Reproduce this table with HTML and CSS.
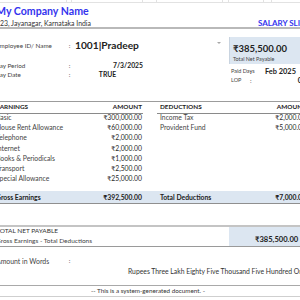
FILE: index.html
```html
<!DOCTYPE html>
<html lang="en">
<head>
<meta charset="utf-8">
<title>Salary Slip</title>
<link rel="stylesheet" href="styles.css">
</head>
<body>
<div class="sheet">
  <div class="gridstrip">
    <span></span><span></span><span></span><span></span><span></span><span></span><span></span><span></span><span></span>
  </div>

  <header class="head">
    <div class="company">My Company Name</div>
    <div class="subhead">
      <span class="addr">123, Jayanagar, Karnataka India</span>
      <span class="title">SALARY SLIP</span>
    </div>
  </header>
  <div class="rule-thick"></div>

  <section class="info">
    <div class="info-left">
      <div class="emp-row">
        <span class="lbl">Employee ID/ Name</span>
        <span class="colon">:</span>
        <span class="emp-val">1001|Pradeep</span>
        <span class="caret"></span>
      </div>
      <div class="kv-row first">
        <span class="lbl">Pay Period</span>
        <span class="colon">:</span>
        <span class="val right">7/3/2025</span>
      </div>
      <div class="kv-row">
        <span class="lbl">Pay Date</span>
        <span class="colon">:</span>
        <span class="val center">TRUE</span>
      </div>
    </div>
    <div class="info-right">
      <div class="net-box">
        <div class="net-val">₹385,500.00</div>
        <div class="net-lbl">Total Net Payable</div>
      </div>
      <div class="days-row first">
        <span class="dlbl">Paid Days</span>
        <span class="dcolon">:</span>
        <span class="dval">Feb 2025</span>
      </div>
      <div class="days-row">
        <span class="dlbl">LOP</span>
        <span class="dcolon">:</span>
        <span class="dval right">0</span>
      </div>
    </div>
  </section>

  <section class="table">
    <div class="trow thead">
      <span class="c-elbl">EARNINGS</span>
      <span class="c-eamt">AMOUNT</span>
      <span class="c-gap"></span>
      <span class="c-dlbl">DEDUCTIONS</span>
      <span class="c-damt">AMOUNT</span>
    </div>
    <div class="trow"><span class="c-elbl">Basic</span><span class="c-eamt">₹300,000.00</span><span class="c-gap"></span><span class="c-dlbl">Income Tax</span><span class="c-damt">₹2,000.00</span></div>
    <div class="trow"><span class="c-elbl">House Rent Allowance</span><span class="c-eamt">₹60,000.00</span><span class="c-gap"></span><span class="c-dlbl">Provident Fund</span><span class="c-damt">₹5,000.00</span></div>
    <div class="trow"><span class="c-elbl">Telephone</span><span class="c-eamt">₹2,000.00</span><span class="c-gap"></span><span class="c-dlbl"></span><span class="c-damt"></span></div>
    <div class="trow"><span class="c-elbl">Internet</span><span class="c-eamt">₹2,000.00</span><span class="c-gap"></span><span class="c-dlbl"></span><span class="c-damt"></span></div>
    <div class="trow"><span class="c-elbl">Books &amp; Periodicals</span><span class="c-eamt">₹1,000.00</span><span class="c-gap"></span><span class="c-dlbl"></span><span class="c-damt"></span></div>
    <div class="trow"><span class="c-elbl">Transport</span><span class="c-eamt">₹2,500.00</span><span class="c-gap"></span><span class="c-dlbl"></span><span class="c-damt"></span></div>
    <div class="trow"><span class="c-elbl">Special Allowance</span><span class="c-eamt">₹25,000.00</span><span class="c-gap"></span><span class="c-dlbl"></span><span class="c-damt"></span></div>
    <div class="trow total">
      <span class="c-elbl">Gross Earnings</span>
      <span class="c-eamt">₹392,500.00</span>
      <span class="c-gap"></span>
      <span class="c-dlbl">Total Deductions</span>
      <span class="c-damt">₹7,000.00</span>
    </div>
  </section>

  <section class="net">
    <div class="net-left">
      <div class="net-title">TOTAL NET PAYABLE</div>
      <div class="net-sub">Gross Earnings - Total Deductions</div>
    </div>
    <div class="net-right">₹385,500.00</div>
  </section>

  <section class="words">
    <div class="words-row">
      <span class="lbl wide">Amount in Words</span>
      <span class="colon">:</span>
    </div>
    <div class="words-text">Rupees Three Lakh Eighty Five Thousand Five Hundred Only</div>
  </section>

  <footer class="foot">-- This is a system-generated document. -</footer>
</div>
</body>
</html>
```

FILE: styles.css
```css
html, body {
  margin: 0;
  padding: 0;
  background: #ffffff;
}
body {
  width: 300px;
  height: 300px;
  overflow: hidden;
  font-family: Lato, "DejaVu Sans", sans-serif;
  color: #3a3a3a;
  font-size: 6.8px;
}
.sheet {
  margin-left: -4px;
  width: 320px;
}

/* excel gridline strip on top */
.gridstrip {
  display: grid;
  grid-template-columns: 71px 5px 71px 14px 66px 6px 35px 8px 44px;
  height: 2px;
  border-bottom: 1px solid #e2e2e2;
}
.gridstrip span {
  border-right: 1px solid #e2e2e2;
}

.company {
  height: 16px;
  line-height: 16px;
  font-size: 10.6px;
  font-weight: 700;
  color: #3434ee;
}
.subhead {
  display: flex;
  height: 8px;
  line-height: 8px;
}
.addr {
  width: 262px;
  flex-shrink: 0;
  font-size: 6.9px;
  color: #333;
}
.title {
  font-size: 8px;
  font-weight: 700;
  color: #3434ee;
  white-space: nowrap;
}
.rule-thick {
  height: 2px;
  background: #b9b9b9;
}

/* info section */
.info {
  display: grid;
  grid-template-columns: 233px 87px;
}
.emp-row {
  display: flex;
  align-items: center;
  margin-top: 10px;
  height: 12px;
}
.lbl {
  width: 71px;
  flex-shrink: 0;
  font-size: 6.3px;
  color: #444;
  white-space: nowrap;
}
.lbl.wide {
  font-size: 6.9px;
}
.colon {
  width: 5px;
  flex-shrink: 0;
  text-align: center;
  font-size: 6.5px;
}
.emp-val {
  margin-left: 3px;
  font-size: 10.2px;
  font-weight: 700;
  color: #222;
}
.caret {
  margin-left: auto;
  margin-right: 8px;
  margin-top: -4px;
  width: 0;
  height: 0;
  border-left: 2px solid transparent;
  border-right: 2px solid transparent;
  border-top: 2px solid #a8a8a8;
}
.kv-row {
  display: flex;
  align-items: center;
  height: 9px;
}
.kv-row.first {
  margin-top: 9.5px;
}
.val {
  width: 71px;
  font-size: 6.8px;
  font-weight: 700;
  color: #222;
}
.val.right { text-align: right; }
.val.center { text-align: center; }

.net-box {
  margin-top: 8px;
  height: 27px;
  background: #dce6f1;
  border-left: 1px solid #c9d4e0;
  padding-left: 3px;
  box-sizing: border-box;
}
.net-val {
  padding-top: 5px;
  height: 13px;
  line-height: 13px;
  font-size: 9.5px;
  font-weight: 700;
  color: #222;
}
.net-lbl {
  margin-top: 1px;
  font-size: 5.4px;
  color: #444;
}
.days-row {
  display: flex;
  align-items: center;
  height: 9px;
  padding-left: 2px;
  font-size: 6.2px;
}
.days-row.first { margin-top: 2.5px; }
.dlbl {
  width: 18px;
  flex-shrink: 0;
  color: #444;
  white-space: nowrap;
  font-size: 5.5px;
}
.dcolon {
  width: 16px;
  flex-shrink: 0;
  padding-left: 1px;
  box-sizing: border-box;
}
.dval {
  width: 37px;
  flex-shrink: 0;
  font-size: 7.4px;
  font-weight: 700;
  color: #222;
  white-space: nowrap;
}
.dval.right { text-align: right; }

/* earnings/deductions table */
.table {
  margin-top: 16.5px;
  border-top: 1px solid #9c9c9c;
}
.trow {
  display: grid;
  grid-template-columns: 76px 71px 14px 115px 44px;
  align-items: center;
  height: 10.2px;
}
.trow > span {
  white-space: nowrap;
  height: 100%;
  line-height: 10.2px;
}
.thead {
  height: 10px;
}
.thead > span {
  font-weight: 700;
  font-size: 6.4px;
  color: #222;
  border-bottom: 1px solid #8a8a8a;
  line-height: 10px;
}
.thead > .c-gap { border-bottom: none; }
.c-elbl { color: #444; }
.c-eamt { text-align: right; padding-right: 1px; color: #2a2a2a; }
.c-dlbl { padding-left: 3px; color: #444; }
.c-damt { text-align: right; padding-right: 10px; color: #2a2a2a; }

.trow.total {
  margin-top: 7.6px;
  height: 12px;
  background: #dce6f1;
  border-bottom: 1px solid #8f8f8f;
}
.trow.total > span {
  line-height: 12px;
  font-weight: 700;
  color: #222;
}

/* net payable */
.net {
  margin-top: 21px;
  display: grid;
  grid-template-columns: 233px 1fr;
  height: 19px;
  border-top: 2px solid #c4c4c4;
  border-bottom: 1px solid #9a9a9a;
}
.net-title {
  height: 7px;
  line-height: 7px;
  font-size: 6.5px;
  color: #333;
}
.net-sub {
  margin-top: 3px;
  height: 8px;
  line-height: 8px;
  font-size: 6.5px;
  color: #444;
}
.net-right {
  background: #dce6f1;
  display: flex;
  align-items: flex-end;
  padding-left: 26px;
  padding-bottom: 2px;
  font-size: 7.6px;
  font-weight: 700;
  color: #222;
  white-space: nowrap;
}

/* amount in words */
.words-row {
  display: flex;
  align-items: center;
  margin-top: 10px;
  height: 8px;
}
.words-text {
  margin-top: 2px;
  height: 8px;
  line-height: 8px;
  padding-left: 132px;
  font-size: 6.8px;
  color: #333;
  white-space: nowrap;
}

.foot {
  margin-top: 10px;
  width: 304px;
  height: 10px;
  line-height: 10px;
  text-align: center;
  font-size: 6.3px;
  color: #333;
  border-top: 1.5px solid #a9a9a9;
  border-bottom: 1px solid #cfcfcf;
}
```
